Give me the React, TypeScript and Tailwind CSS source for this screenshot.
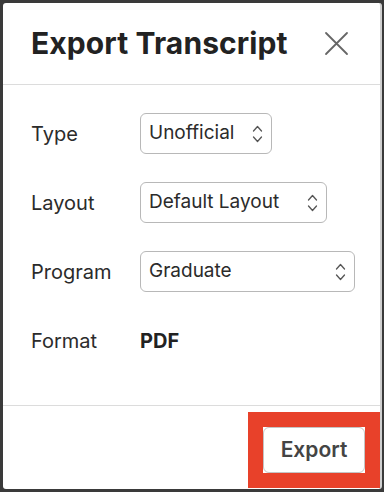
const font = { fontFamily: "Inter, 'Noto Sans', sans-serif" };

function UpDown() {
  return (
    <svg width="11" height="20" viewBox="0 0 11 20" fill="none" stroke="#555" strokeWidth="1.3" strokeLinecap="round" strokeLinejoin="round">
      <path d="M1.5 7 L5.5 2.5 L9.5 7" />
      <path d="M1.5 13 L5.5 17.5 L9.5 13" />
    </svg>
  );
}

function Select({ value, width }: { value: string; width: string }) {
  return (
    <div className={`${width} h-[41px] flex items-center justify-between pl-[8px] pr-[8px] border border-[#b8b8b8] rounded-[6px] bg-white`}>
      <span className="text-[19px] text-[#2b2b2b]">{value}</span>
      <UpDown />
    </div>
  );
}

function Row({ label, children }: { label: string; children: React.ReactNode }) {
  return (
    <div className="flex items-center h-[41px]">
      <div className="w-[109px] text-[20px] text-[#2b2b2b]">{label}</div>
      {children}
    </div>
  );
}

export default function App() {
  return (
    <div className="w-[384px] h-[492px] bg-[#3a3a3a] pt-[3px] pl-[3px]" style={font}>
      <div className="w-[379px] h-[486px] bg-white rounded-[3px] border-r-2 border-[#d0d0d0] flex flex-col">
        <div className="h-[82px] flex items-center justify-between pl-[28px] pr-[31px] border-b border-[#dcdcdc]">
          <h1 className="text-[30px] font-bold text-[#222] tracking-[0.1px]">Export Transcript</h1>
          <svg width="25" height="25" viewBox="0 0 25 25" stroke="#666" strokeWidth="1.8" strokeLinecap="round">
            <path d="M2 2 L23 23 M23 2 L2 23" />
          </svg>
        </div>
        <div className="flex flex-col gap-[28px] pl-[28px] pt-[28px] pb-[44px] border-b border-[#dcdcdc]">
          <Row label="Type">
            <Select value="Unofficial" width="w-[132px]" />
          </Row>
          <Row label="Layout">
            <Select value="Default Layout" width="w-[187px]" />
          </Row>
          <Row label="Program">
            <Select value="Graduate" width="w-[215px]" />
          </Row>
          <Row label="Format">
            <span className="text-[20px] font-bold text-[#222]">PDF</span>
          </Row>
        </div>
        <div className="flex-1 flex justify-end items-start pt-[6px] pr-0">
          <div className="border-[15px] border-[#e8412a]">
            <button className="w-[102px] h-[46px] bg-white border border-[#c4c4c4] rounded-[6px] text-[21px] font-semibold text-[#444]">
              Export
            </button>
          </div>
        </div>
      </div>
    </div>
  );
}
